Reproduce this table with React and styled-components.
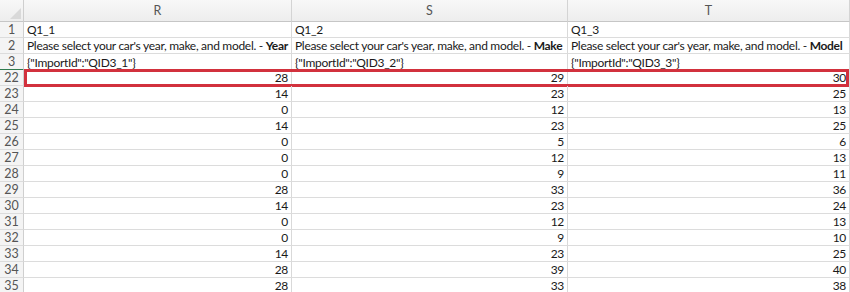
import styled, { createGlobalStyle } from "styled-components";

const GlobalStyle = createGlobalStyle`
  html, body { margin: 0; padding: 0; background: #ffffff; }
  body { font-family: Lato, "Open Sans", sans-serif; }
`

const colunas = ["R", "S", "T"];

const cabecalho = [
    { num: 1, celulas: ["Q1_1", "Q1_2", "Q1_3"] },
    { num: 2, pergunta: true, celulas: ["Year", "Make", "Model"] },
    { num: 3, celulas: ['{"ImportId":"QID3_1"}', '{"ImportId":"QID3_2"}', '{"ImportId":"QID3_3"}'] },
];

const dados = [
    [22, 28, 29, 30],
    [23, 14, 23, 25],
    [24, 0, 12, 13],
    [25, 14, 23, 25],
    [26, 0, 5, 6],
    [27, 0, 12, 13],
    [28, 0, 9, 11],
    [29, 28, 33, 36],
    [30, 14, 23, 24],
    [31, 0, 12, 13],
    [32, 0, 9, 10],
    [33, 14, 23, 25],
    [34, 28, 39, 40],
    [35, 28, 33, 38],
];

export default function App() {
    return (
        <>
            <GlobalStyle />
            <Planilha>
                <Linha>
                    <Canto />
                    {colunas.map(c => <Letra key={c}>{c}</Letra>)}
                </Linha>

                {cabecalho.map(linha => (
                    <Linha key={linha.num}>
                        <NumLinha congelada={linha.num === 3}>{linha.num}</NumLinha>
                        {linha.celulas.map((txt, i) => (
                            <Celula key={i}>
                                {linha.pergunta
                                    ? <span>Please select your car's year, make, and model. - <b>{txt}</b></span>
                                    : txt}
                            </Celula>
                        ))}
                    </Linha>
                ))}

                {dados.map(([num, ...valores]) => (
                    <Linha key={num} destaque={num === 22}>
                        <NumLinha>{num}</NumLinha>
                        {valores.map((v, i) => <Celula key={i} numero>{v}</Celula>)}
                    </Linha>
                ))}
            </Planilha>
        </>
    )
}

const Planilha = styled.div`
width: 850px;
height: 292px;
overflow: hidden;
font-size: 12px;
letter-spacing: -0.3px;
color: #1a1a1a;
`

const Linha = styled.div`
position: relative;
display: grid;
grid-template-columns: 24px 268px 276px 282px;
height: 16px;
&:first-child {
    height: 22px;
}
${props => props.destaque && `
    &::after {
        content: "";
        position: absolute;
        left: 24px;
        top: -1px;
        width: 825px;
        height: 18px;
        box-sizing: border-box;
        border: 3px solid #d2313d;
        pointer-events: none;
    }
`}
`

const Canto = styled.div`
position: relative;
background: linear-gradient(#f8f8f8, #ededed);
border-right: 1px solid #cfcfcf;
border-bottom: 1px solid #c6c6c6;
&::after {
    content: "";
    position: absolute;
    right: 2px;
    bottom: 2px;
    border-left: 11px solid transparent;
    border-bottom: 11px solid #d9d9d9;
}
`

const Letra = styled.div`
display: flex;
align-items: center;
justify-content: center;
background: linear-gradient(#f8f8f8, #ededed);
border-right: 1px solid #d4d4d4;
border-bottom: 1px solid #c6c6c6;
color: #555555;
font-size: 12.5px;
letter-spacing: 0;
`

const NumLinha = styled.div`
display: flex;
align-items: center;
justify-content: center;
background: #f4f4f4;
border-right: 1px solid #cfcfcf;
border-bottom: ${props => props.congelada ? "2px solid #2f7a4d" : "1px solid #dcdcdc"};
box-sizing: border-box;
color: #555555;
font-size: 12.5px;
letter-spacing: 0;
`

const Celula = styled.div`
display: flex;
align-items: center;
justify-content: ${props => props.numero ? "flex-end" : "flex-start"};
padding: 0 3px;
border-right: 1px solid #d9d9d9;
border-bottom: 1px solid #dcdcdc;
white-space: nowrap;
overflow: hidden;
b {
    font-weight: 700;
}
`
